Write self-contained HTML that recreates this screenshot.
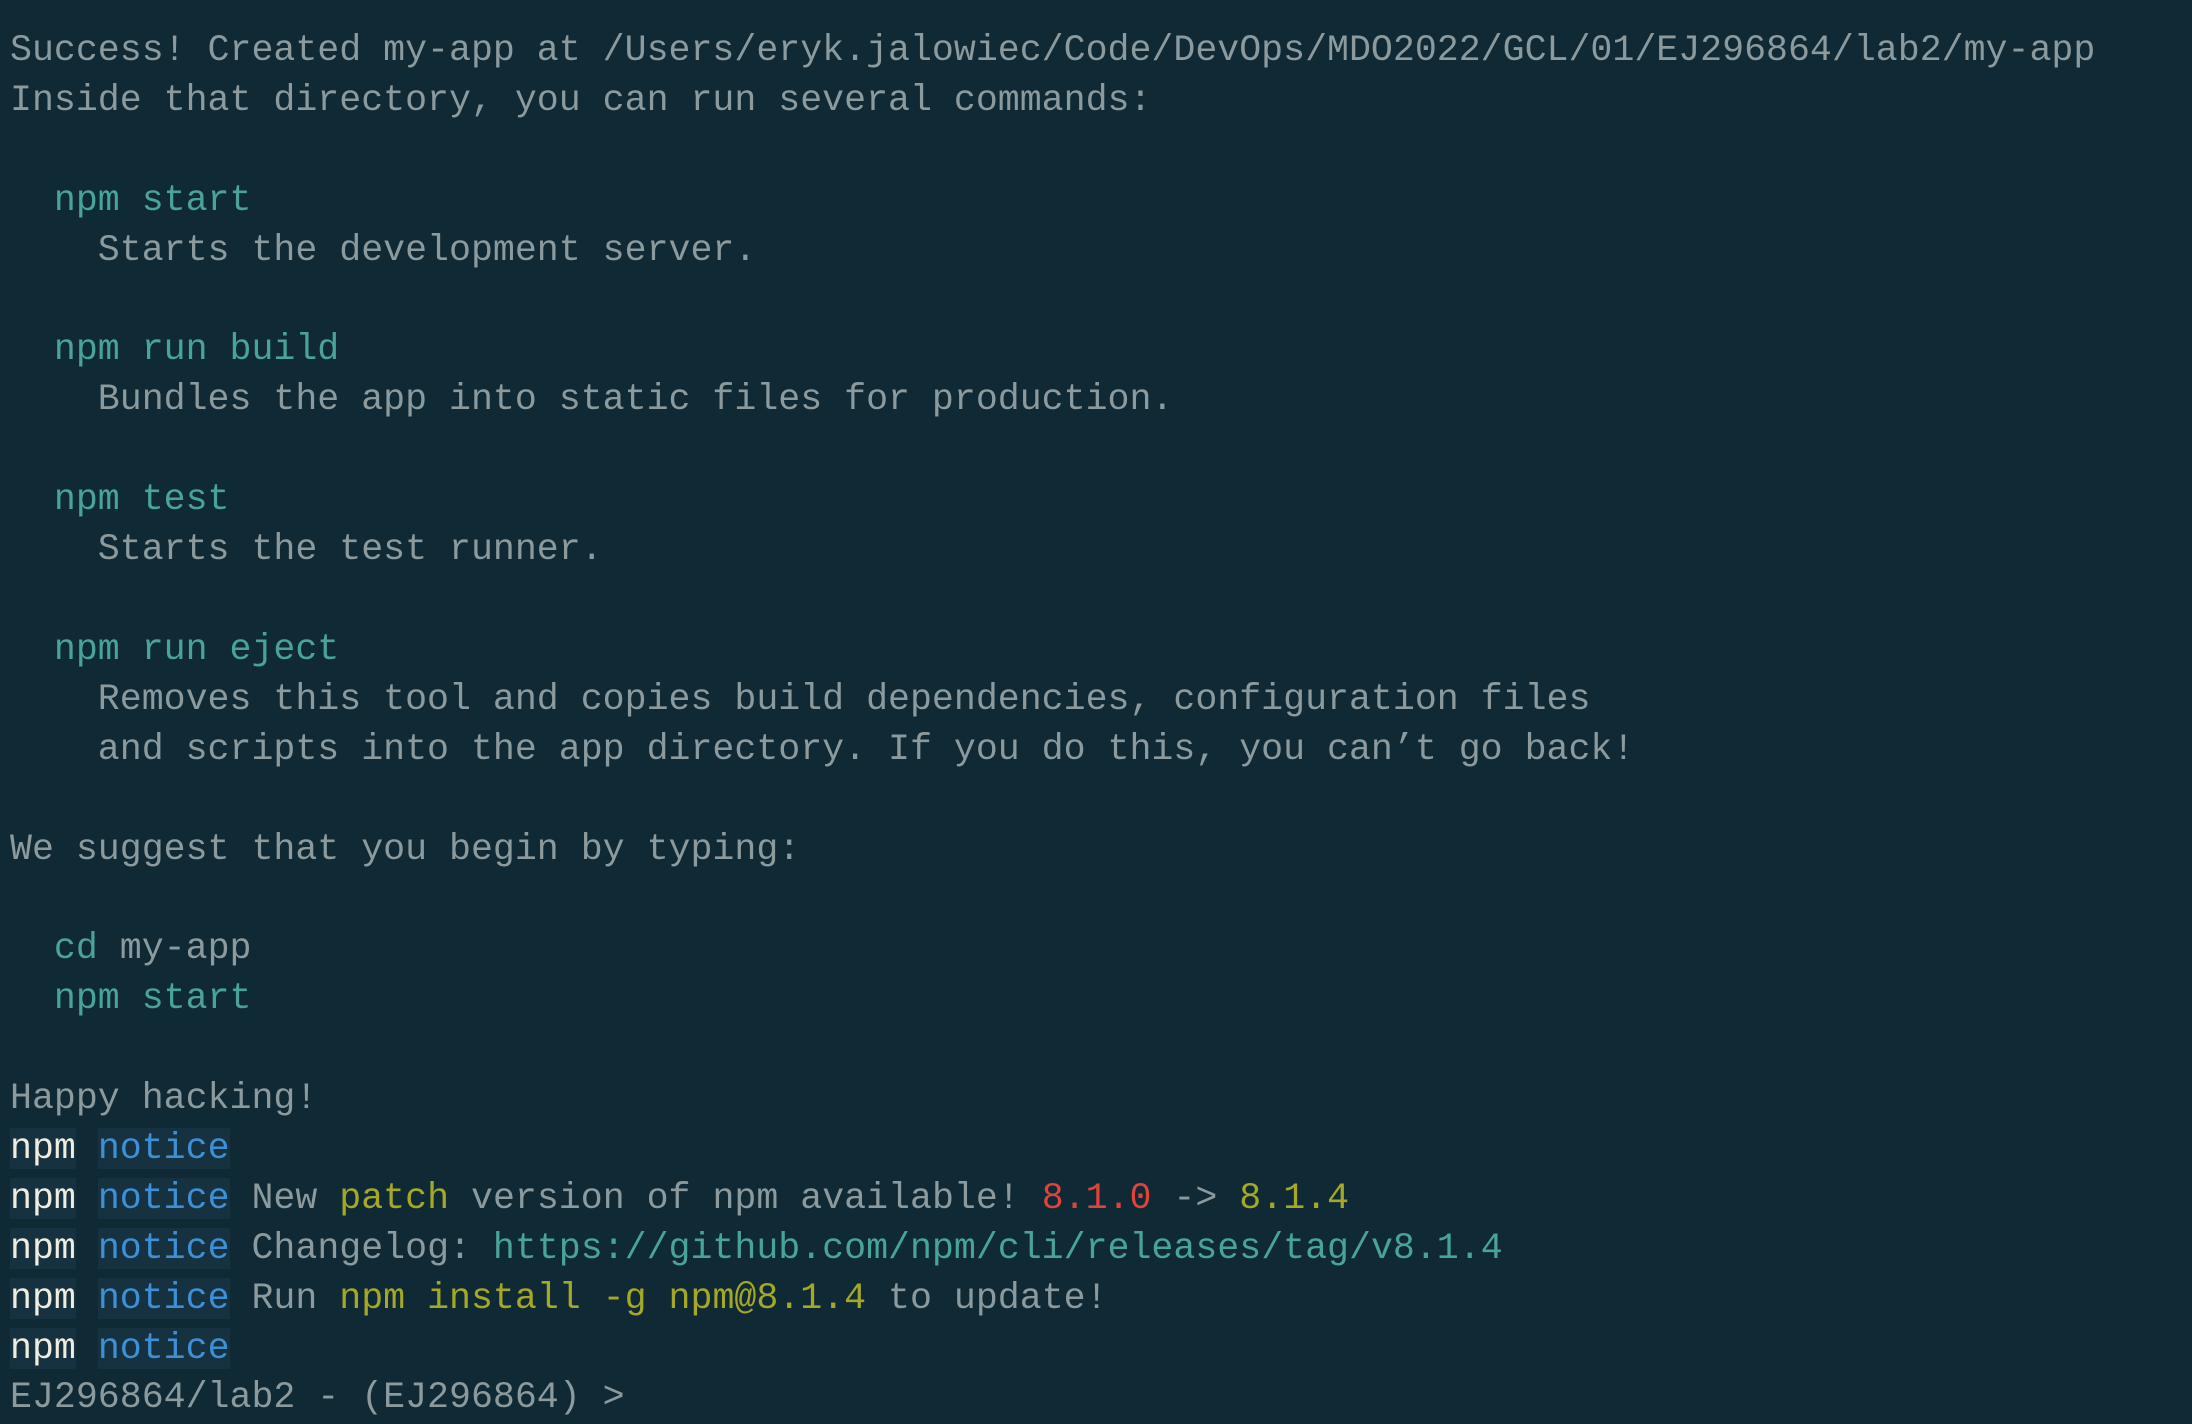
<!DOCTYPE html>
<html><head><meta charset="utf-8"><style>
html,body{margin:0;padding:0;background:#0f2935;width:2192px;height:1424px;overflow:hidden}
pre{margin:0;position:absolute;left:10px;top:26px;font-family:"Liberation Mono",monospace;font-size:36.6px;line-height:49.9px;color:#8b9a9c;white-space:pre}
.t{color:#4aa39a}.w{color:#efece0;background:#163240}.b{color:#3d8fd6;background:#163240}.y{color:#a4a826}.r{color:#e0433a}
</style></head><body><pre>Success! Created my-app at /Users/eryk.jalowiec/Code/DevOps/MDO2022/GCL/01/EJ296864/lab2/my-app
Inside that directory, you can run several commands:

  <span class="t">npm start</span>
    Starts the development server.

  <span class="t">npm run build</span>
    Bundles the app into static files for production.

  <span class="t">npm test</span>
    Starts the test runner.

  <span class="t">npm run eject</span>
    Removes this tool and copies build dependencies, configuration files
    and scripts into the app directory. If you do this, you can’t go back!

We suggest that you begin by typing:

  <span class="t">cd</span> my-app
  <span class="t">npm start</span>

Happy hacking!
<span class="w">npm</span> <span class="b">notice</span>
<span class="w">npm</span> <span class="b">notice</span> New <span class="y">patch</span> version of npm available! <span class="r">8.1.0</span> -&gt; <span class="y">8.1.4</span>
<span class="w">npm</span> <span class="b">notice</span> Changelog: <span class="t">https://github.com/npm/cli/releases/tag/v8.1.4</span>
<span class="w">npm</span> <span class="b">notice</span> Run <span class="y">npm install -g npm@8.1.4</span> to update!
<span class="w">npm</span> <span class="b">notice</span>
EJ296864/lab2 - (EJ296864) &gt;</pre></body></html>
